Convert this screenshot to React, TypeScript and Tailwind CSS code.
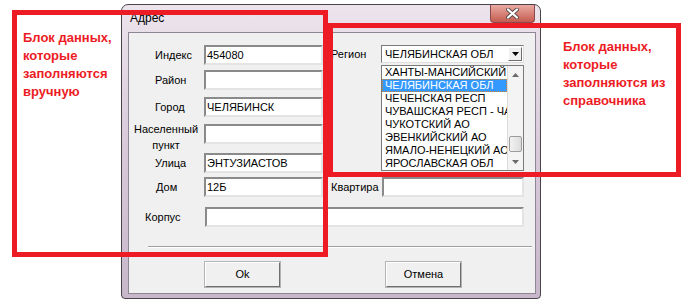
import React from "react";

const field =
  "h-[20px] border-2 border-t-[#8a8a8a] border-l-[#8a8a8a] border-b-[#e4e4e4] border-r-[#e4e4e4] bg-white pl-[1px] text-[11px] leading-[16px] text-black whitespace-nowrap overflow-hidden";

const regions = [
  "ХАНТЫ-МАНСИЙСКИЙ АО",
  "ЧЕЛЯБИНСКАЯ ОБЛ",
  "ЧЕЧЕНСКАЯ РЕСП",
  "ЧУВАШСКАЯ РЕСП - ЧАВАШ РЕСП",
  "ЧУКОТСКИЙ АО",
  "ЭВЕНКИЙСКИЙ АО",
  "ЯМАЛО-НЕНЕЦКИЙ АО",
  "ЯРОСЛАВСКАЯ ОБЛ",
];

function Arrow({ up }: { up?: boolean }) {
  return (
    <svg width="7" height="4" viewBox="0 0 7 4">
      <path d={up ? "M0 4 L3.5 0 L7 4 Z" : "M0 0 L3.5 4 L7 0 Z"} fill="#6a6a6a" />
    </svg>
  );
}

function RegionList() {
  return (
    <div className="mt-[2px] flex h-[106px] w-[143px] border border-[#7a7a7a] bg-white">
      <div className="flex-1 overflow-hidden">
        {regions.map((r, i) =>
          i === 1 ? (
            <div
              key={r}
              className="h-[13px] overflow-hidden whitespace-nowrap border border-dotted border-[#d9822b] bg-[#3399ff] pl-[2px] text-[11px] leading-[11px] text-white"
            >
              {r}
            </div>
          ) : (
            <div key={r} className="h-[13px] overflow-hidden whitespace-nowrap pl-[3px] text-[11px] leading-[13px] text-black">
              {r}
            </div>
          )
        )}
      </div>
      <div className="flex w-[16px] flex-col border-l border-[#dcdcdc] bg-[#f4f4f4]">
        <div className="flex h-[17px] items-center justify-center">
          <Arrow up />
        </div>
        <div className="flex flex-1 flex-col justify-end pb-[2px]">
          <div className="mx-[1px] h-[16px] rounded-[2px] border border-[#9c9c9c] bg-linear-to-r from-[#f2f2f2] to-[#dcdcdc]" />
        </div>
        <div className="flex h-[16px] items-center justify-center">
          <Arrow />
        </div>
      </div>
    </div>
  );
}

function Combo() {
  return (
    <div className="flex h-[18px] w-[143px] items-center justify-between border border-t-[#7a7a7a] border-l-[#7a7a7a] border-b-[#dedede] border-r-[#dedede] bg-white pl-[3px] pr-[1px] text-[11px] text-black">
      <span className="whitespace-nowrap">ЧЕЛЯБИНСКАЯ ОБЛ</span>
      <div className="flex h-[14px] w-[14px] items-center justify-center border border-t-white border-l-white border-b-[#6e6e6e] border-r-[#6e6e6e] bg-[#f0f0f0]">
        <svg width="7" height="4" viewBox="0 0 7 4">
          <path d="M0 0 L3.5 4 L7 0 Z" fill="#000" />
        </svg>
      </div>
    </div>
  );
}

function Button({ children }: { children: React.ReactNode }) {
  return (
    <div className="flex h-[25px] w-[75px] items-center justify-center border border-t-white border-l-white border-b-[#6e6e6e] border-r-[#6e6e6e] bg-[#f0f0f0] text-[11px] text-black shadow-[0_0_0_1px_#b4b4b4]">
      {children}
    </div>
  );
}

export default function App() {
  return (
    <div
      className="relative h-[305px] w-[692px] overflow-hidden bg-white pl-[121px] pt-[4px] text-[11px] text-black"
      style={{ fontFamily: '"Liberation Sans", Arial, sans-serif' }}
    >
      <div className="flex h-[295px] w-[420px] flex-col rounded-t-[7px] rounded-b-[4px] border border-[#4a4448] bg-linear-to-b from-[#ece4ec] via-[#d8c9d9] to-[#c8b6ca]">
        <div className="flex h-[27px] items-start justify-between">
          <span className="ml-[8px] mt-[5px] text-[12px] leading-[16px] text-black">Адрес</span>
          <div className="mr-[5px] flex h-[18px] w-[45px] items-center justify-center rounded-b-[4px] border border-t-0 border-[#8a4a4a] bg-linear-to-b from-[#e9aaa2] to-[#c45a4f]">
            <svg width="13" height="11" viewBox="0 0 13 11">
              <path d="M2 1.5 L11 9.5 M11 1.5 L2 9.5" stroke="#5a4a4a" strokeWidth="4" strokeLinecap="round" />
              <path d="M2 1.5 L11 9.5 M11 1.5 L2 9.5" stroke="#fff" strokeWidth="2.2" strokeLinecap="round" />
            </svg>
          </div>
        </div>
        <div className="ml-[6px] mr-[4px] h-[262px] bg-[#f0f0f0] shadow-[inset_0_0_0_1px_#8e8694]">
          <div className="flex items-start">
            <div className="w-[195px]">
              <div className="mt-[13px] flex h-[20px] items-center">
                <span className="w-[76px] pl-[27px]">Индекс</span>
                <div className={field + " w-[119px]"}>454080</div>
              </div>
              <div className="mt-[5px] flex h-[20px] items-center">
                <span className="w-[76px] pl-[27px]">Район</span>
                <div className={field + " w-[119px]"} />
              </div>
              <div className="mt-[7px] flex h-[20px] items-center">
                <span className="w-[76px] pl-[27px]">Город</span>
                <div className={field + " w-[119px]"}>ЧЕЛЯБИНСК</div>
              </div>
              <div className="mt-[7px] flex h-[20px] items-center">
                <span className="mt-[5px] w-[76px] pl-[6px] pr-[6px] text-center leading-[16px]">
                  Населенный пункт
                </span>
                <div className={field + " w-[119px]"} />
              </div>
              <div className="mt-[9px] flex h-[20px] items-center">
                <span className="w-[76px] pl-[27px]">Улица</span>
                <div className={field + " w-[119px]"}>ЭНТУЗИАСТОВ</div>
              </div>
            </div>
            <div className="ml-[8px]">
              <div className="mt-[13px] flex h-[18px] items-center">
                <span className="w-[50px]">Регион</span>
                <Combo />
              </div>
              <div className="ml-[50px]">
                <RegionList />
              </div>
            </div>
          </div>
          <div className="mt-[4px] flex h-[20px] items-center">
            <span className="w-[76px] pl-[28px]">Дом</span>
            <div className={field + " w-[119px]"}>12Б</div>
            <span className="ml-[8px] w-[51px]">Квартира</span>
            <div className={field + " w-[142px]"} />
          </div>
          <div className="mt-[10px] flex h-[20px] items-center">
            <span className="w-[77px] pl-[17px]">Корпус</span>
            <div className={field + " w-[319px]"} />
          </div>
          <div className="ml-[20px] mt-[19px] h-[2px] w-[384px] border-t border-b border-t-[#a0a0a0] border-b-white" />
          <div className="mt-[14px] flex">
            <div className="ml-[77px]">
              <Button>Ok</Button>
            </div>
            <div className="ml-[106px]">
              <Button>Отмена</Button>
            </div>
          </div>
        </div>
      </div>

      {/* аннотации поверх скриншота */}
      <div className="absolute left-[12px] top-[10px] h-[247px] w-[316px] border-[5px] border-[#ed1c24]" />
      <div className="absolute left-[328px] top-[23px] h-[154px] w-[353px] border-[5px] border-[#ed1c24]" />
      <div className="absolute left-[23px] top-[29px] text-[13px] font-bold leading-[18px] text-[#ed1c24]">
        Блок данных,
        <br />
        которые
        <br />
        заполняются
        <br />
        вручную
      </div>
      <div className="absolute left-[563px] top-[38px] text-[13px] font-bold leading-[18px] text-[#ed1c24]">
        Блок данных,
        <br />
        которые
        <br />
        заполняются из
        <br />
        справочника
      </div>
    </div>
  );
}
